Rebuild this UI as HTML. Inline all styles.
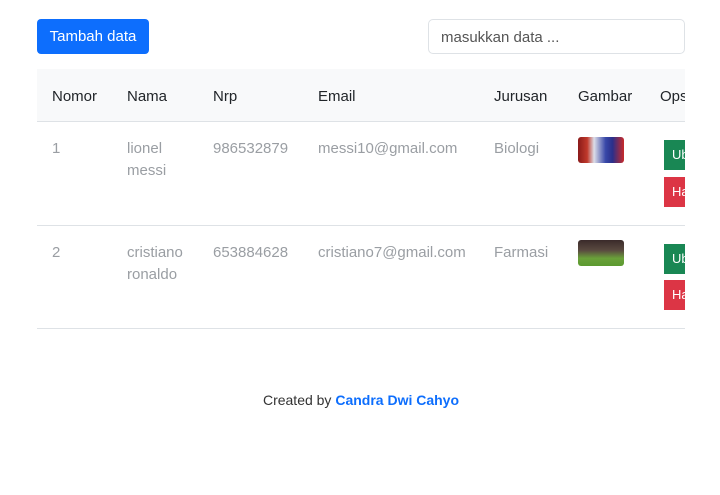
<!DOCTYPE html>
<html><head><meta charset="utf-8"><style>
*{box-sizing:border-box;margin:0;padding:0}
body{width:720px;height:495px;background:#fff;font-family:"Liberation Sans",sans-serif;overflow:hidden;position:relative;color:#212529}
.btn{position:absolute;left:37px;top:19px;width:112px;height:35px;background:#0d6efd;color:#fff;border-radius:4px;font-size:15px;line-height:36px;text-align:center}
.inp{position:absolute;left:428px;top:19px;width:257px;height:35px;border:1px solid #dee2e6;border-radius:5px;font-size:15px;line-height:35px;padding-left:12px;color:#555}
.thead{position:absolute;left:37px;top:69px;width:648px;height:53px;background:#f8f9fa;border-bottom:1px solid #dee2e6}
.t{position:absolute;font-size:15px;white-space:nowrap}
.g{color:#9a9ea3;line-height:22px}
.row{position:absolute;left:37px;width:648px;border-bottom:1px solid #dee2e6}
.clip{position:absolute;left:0;top:0;width:685px;height:495px;overflow:hidden}
.ub{position:absolute;left:664px;width:40px;height:30px;background:#198754;color:#fff;font-size:13px;line-height:30px;padding-left:8px}
.ha{position:absolute;left:664px;width:40px;height:30px;background:#dc3545;color:#fff;font-size:13px;line-height:30px;padding-left:8px}
.img{position:absolute;left:578px;width:46px;height:26px;border-radius:3px}
</style></head><body>
<div class="btn">Tambah data</div>
<div class="inp">masukkan data ...</div>
<div class="clip">
<div class="thead"></div>
<div class="t" style="left:52px;top:88px">Nomor</div>
<div class="t" style="left:127px;top:88px">Nama</div>
<div class="t" style="left:213px;top:88px">Nrp</div>
<div class="t" style="left:318px;top:88px">Email</div>
<div class="t" style="left:494px;top:88px">Jurusan</div>
<div class="t" style="left:578px;top:88px">Gambar</div>
<div class="t" style="left:660px;top:88px">Opsi</div>
<div class="row" style="top:122px;height:104px"></div>
<div class="t g" style="left:52px;top:138px">1</div>
<div class="t g" style="left:127px;top:138px">lionel<br>messi</div>
<div class="t g" style="left:213px;top:138px">986532879</div>
<div class="t g" style="left:318px;top:138px">messi10@gmail.com</div>
<div class="t g" style="left:494px;top:138px">Biologi</div>
<div class="img" style="top:137px;background:linear-gradient(90deg,#8a1a1a,#c0392b 20%,#dcdde8 35%,#3848a8 60%,#2a2f8a 75%,#c92a2a)"></div>
<div class="ub" style="top:140px">Ub</div>
<div class="ha" style="top:177px">Ha</div>
<div class="row" style="top:226px;height:103px"></div>
<div class="t g" style="left:52px;top:242px">2</div>
<div class="t g" style="left:127px;top:242px">cristiano<br>ronaldo</div>
<div class="t g" style="left:213px;top:242px">653884628</div>
<div class="t g" style="left:318px;top:242px">cristiano7@gmail.com</div>
<div class="t g" style="left:494px;top:242px">Farmasi</div>
<div class="img" style="top:240px;background:linear-gradient(180deg,#3a2a2a,#5a4a40 40%,#6aa03a 70%,#5c9a30)"></div>
<div class="ub" style="top:244px">Ub</div>
<div class="ha" style="top:280px">Ha</div>
</div>
<div class="t" style="left:0;width:722px;text-align:center;top:392px;font-size:14px;color:#333">Created by <b style="color:#0d6efd">Candra Dwi Cahyo</b></div>
</body></html>
